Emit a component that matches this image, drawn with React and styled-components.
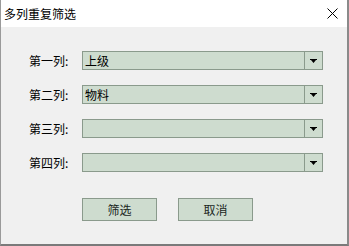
import styled, { createGlobalStyle } from "styled-components";

const GlobalStyle = createGlobalStyle`
    html, body {
        margin: 0;
        padding: 0;
        background: #f0f0f0;
    }
    * {
        box-sizing: border-box;
    }
`;

const Window = styled.div`
    width: 349px;
    height: 246px;
    display: flex;
    flex-direction: column;
    background: #f0f0f0;
    border-left: 1px solid #9a9a9a;
    border-right: 2px solid #8a8a8a;
    border-bottom: 2px solid #7a7a7a;
    font-family: "Noto Sans CJK SC", "Liberation Sans", sans-serif;
    font-size: 12px;
    color: #000;
`;

const TitleBar = styled.div`
    height: 27px;
    flex: none;
    display: flex;
    align-items: center;
    justify-content: space-between;
    background: #fff;
    padding: 0 8px 0 3px;
`;

const Title = styled.span`
    font-size: 12px;
    line-height: 1;
`;

const CloseButton = styled.div`
    width: 14px;
    height: 14px;
    display: flex;
    align-items: center;
    justify-content: center;
`;

const Form = styled.div`
    display: flex;
    flex-direction: column;
    gap: 15px;
    padding: 24px 0 0 28px;
`;

const Row = styled.div`
    display: flex;
    align-items: center;
    height: 19px;
`;

const Label = styled.span`
    width: 53px;
    flex: none;
    line-height: 1;
`;

const Combo = styled.div`
    width: 241px;
    height: 19px;
    display: flex;
    background: #cedccf;
    border: 1px solid #8a9a8c;
`;

const ComboText = styled.div`
    flex: 1;
    padding-left: 2px;
    display: flex;
    align-items: center;
    line-height: 1;
`;

const ComboArrow = styled.div`
    width: 18px;
    flex: none;
    display: flex;
    align-items: center;
    justify-content: center;
    border-left: 1px solid #8a9a8c;
`;

const Buttons = styled.div`
    display: flex;
    gap: 21px;
    padding: 26px 0 0 81px;
`;

const Button = styled.button`
    width: 75px;
    height: 23px;
    background: #cedccf;
    border: 1px solid #8a9a8c;
    font-family: inherit;
    font-size: 12px;
    color: #1b261c;
    padding: 0;
    line-height: 1;
`;

const fields = [
    { label: "第一列:", value: "上级" },
    { label: "第二列:", value: "物料" },
    { label: "第三列:", value: "" },
    { label: "第四列:", value: "" },
];

export default function App() {
    return (
        <>
            <GlobalStyle />
            <Window>
                <TitleBar>
                    <Title>多列重复筛选</Title>
                    <CloseButton>
                        <svg width="11" height="11" viewBox="0 0 11 11">
                            <path d="M0.5 0.5 L10.5 10.5 M10.5 0.5 L0.5 10.5" stroke="#000" strokeWidth="1" />
                        </svg>
                    </CloseButton>
                </TitleBar>
                <Form>
                    {fields.map((f) => (
                        <Row key={f.label}>
                            <Label>{f.label}</Label>
                            <Combo>
                                <ComboText>{f.value}</ComboText>
                                <ComboArrow>
                                    <svg width="7" height="4" viewBox="0 0 7 4">
                                        <path d="M0 0 H7 V1 H6 L3.5 4 L1 1 H0 Z" fill="#000" />
                                    </svg>
                                </ComboArrow>
                            </Combo>
                        </Row>
                    ))}
                </Form>
                <Buttons>
                    <Button>筛选</Button>
                    <Button>取消</Button>
                </Buttons>
            </Window>
        </>
    );
}
